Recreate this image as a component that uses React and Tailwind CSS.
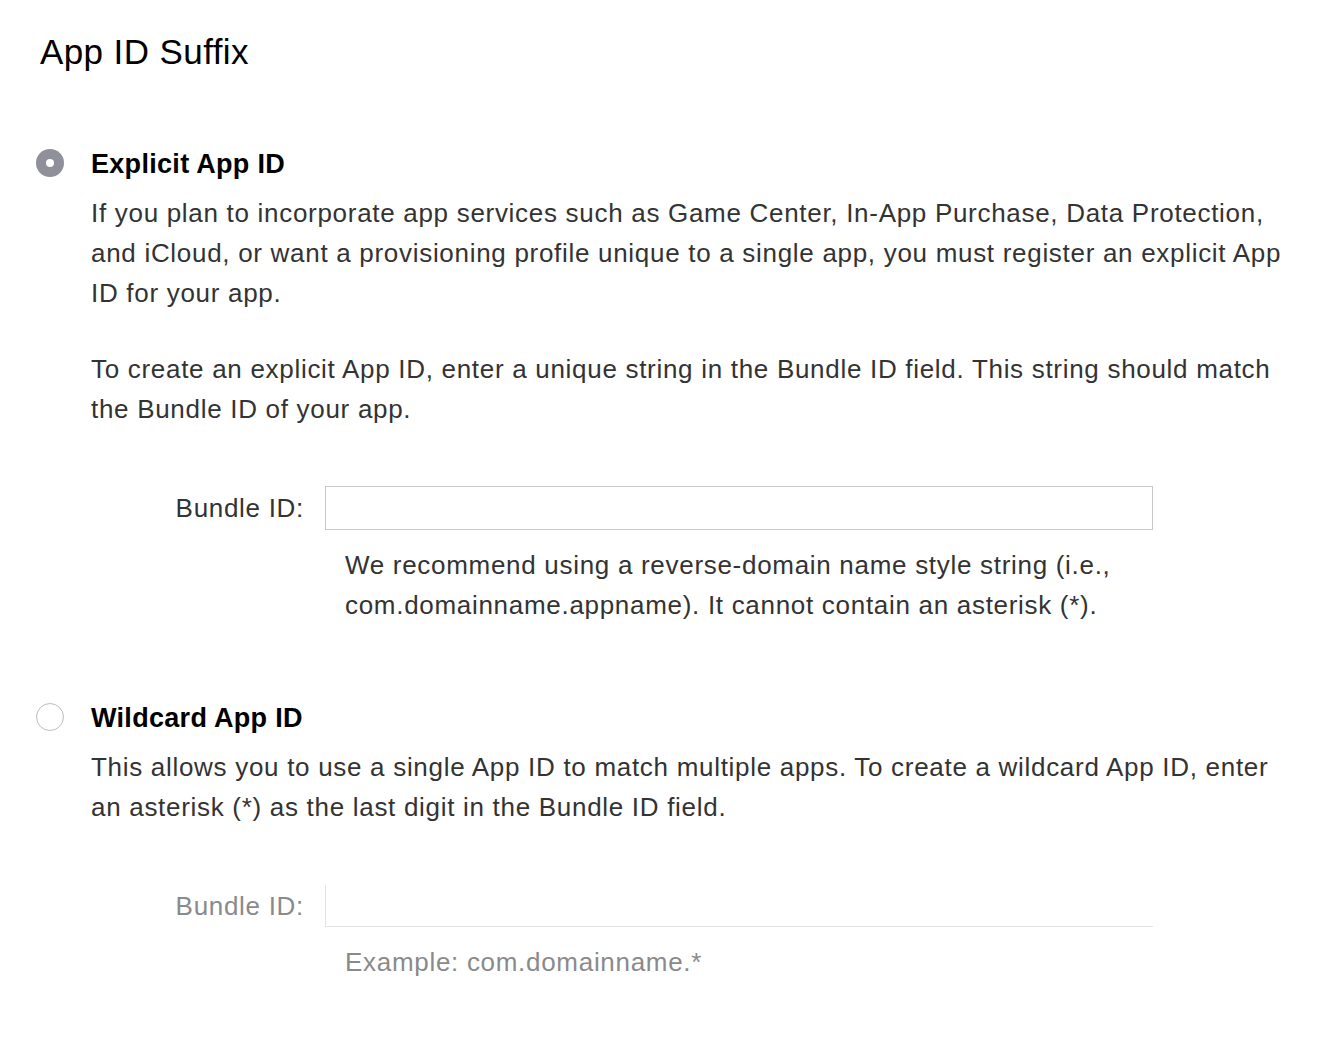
const font = { fontFamily: '"Liberation Sans", Arial, sans-serif' };

const Radio = ({ checked }) =>
  checked ? (
    <span className="mt-[2px] flex h-[28px] w-[28px] shrink-0 items-center justify-center rounded-full bg-[#8f9099]">
      <span className="h-[8px] w-[8px] rounded-full bg-white" />
    </span>
  ) : (
    <span className="mt-[2px] block h-[28px] w-[28px] shrink-0 rounded-full border border-[#bdbdbd] bg-white" />
  );

const BundleRow = ({ disabled, help, top }) => (
  <div className={`${top} pl-[72px]`}>
    <div className="flex items-center">
      <label
        className={`w-[213px] pr-[21px] text-right text-[26px] tracking-[0.7px] ${
          disabled ? 'text-[#8a8a8a]' : 'text-[#333]'
        }`}
      >
        Bundle ID:
      </label>
      <input
        disabled={disabled}
        className={`w-[828px] bg-white outline-none ${
          disabled
            ? 'h-[42px] border-b border-l border-[#e3e3e3]'
            : 'h-[44px] border border-[#c8c8c8]'
        }`}
      />
    </div>
    <div
      className={`mt-[15px] ml-[233px] text-[26px] leading-[40px] tracking-[0.7px] ${
        disabled ? 'text-[#8a8a8a]' : 'text-[#333]'
      }`}
    >
      {help}
    </div>
  </div>
);

const body = 'text-[26px] leading-[40px] tracking-[0.7px] text-[#333] whitespace-nowrap';

export default function App() {
  return (
    <div className="min-h-[1048px] bg-white pt-[30px] pl-[40px] pr-[40px]" style={font}>
      <h1 className="text-[35px] leading-[44px] tracking-[0.4px] text-black">App ID Suffix</h1>

      <section className="mt-[73px] flex gap-[27px]">
        <div className="-ml-[4px]">
          <Radio checked />
        </div>
        <div className="flex-1">
          <h2 className="text-[27px] font-bold leading-[34px] tracking-[0.3px] text-black">
            Explicit App ID
          </h2>
          <p className={`mt-[12px] ${body}`}>
            If you plan to incorporate app services such as Game Center, In-App Purchase, Data Protection,
            <br />
            and iCloud, or want a provisioning profile unique to a single app, you must register an explicit App
            <br />
            ID for your app.
          </p>
          <p className={`mt-[36px] ${body}`}>
            To create an explicit App ID, enter a unique string in the Bundle ID field. This string should match
            <br />
            the Bundle ID of your app.
          </p>
        </div>
      </section>
      <BundleRow
        top="mt-[57px]"
        help={
          <>
            We recommend using a reverse-domain name style string (i.e.,
            <br />
            com.domainname.appname). It cannot contain an asterisk (*).
          </>
        }
      />

      <section className="mt-[76px] flex gap-[27px]">
        <div className="-ml-[4px]">
          <Radio />
        </div>
        <div className="flex-1">
          <h2 className="text-[27px] font-bold leading-[34px] tracking-[0.3px] text-black">
            Wildcard App ID
          </h2>
          <p className={`mt-[12px] ${body}`}>
            This allows you to use a single App ID to match multiple apps. To create a wildcard App ID, enter
            <br />
            an asterisk (*) as the last digit in the Bundle ID field.
          </p>
        </div>
      </section>
      <BundleRow top="mt-[58px]" disabled help="Example: com.domainname.*" />
    </div>
  );
}
